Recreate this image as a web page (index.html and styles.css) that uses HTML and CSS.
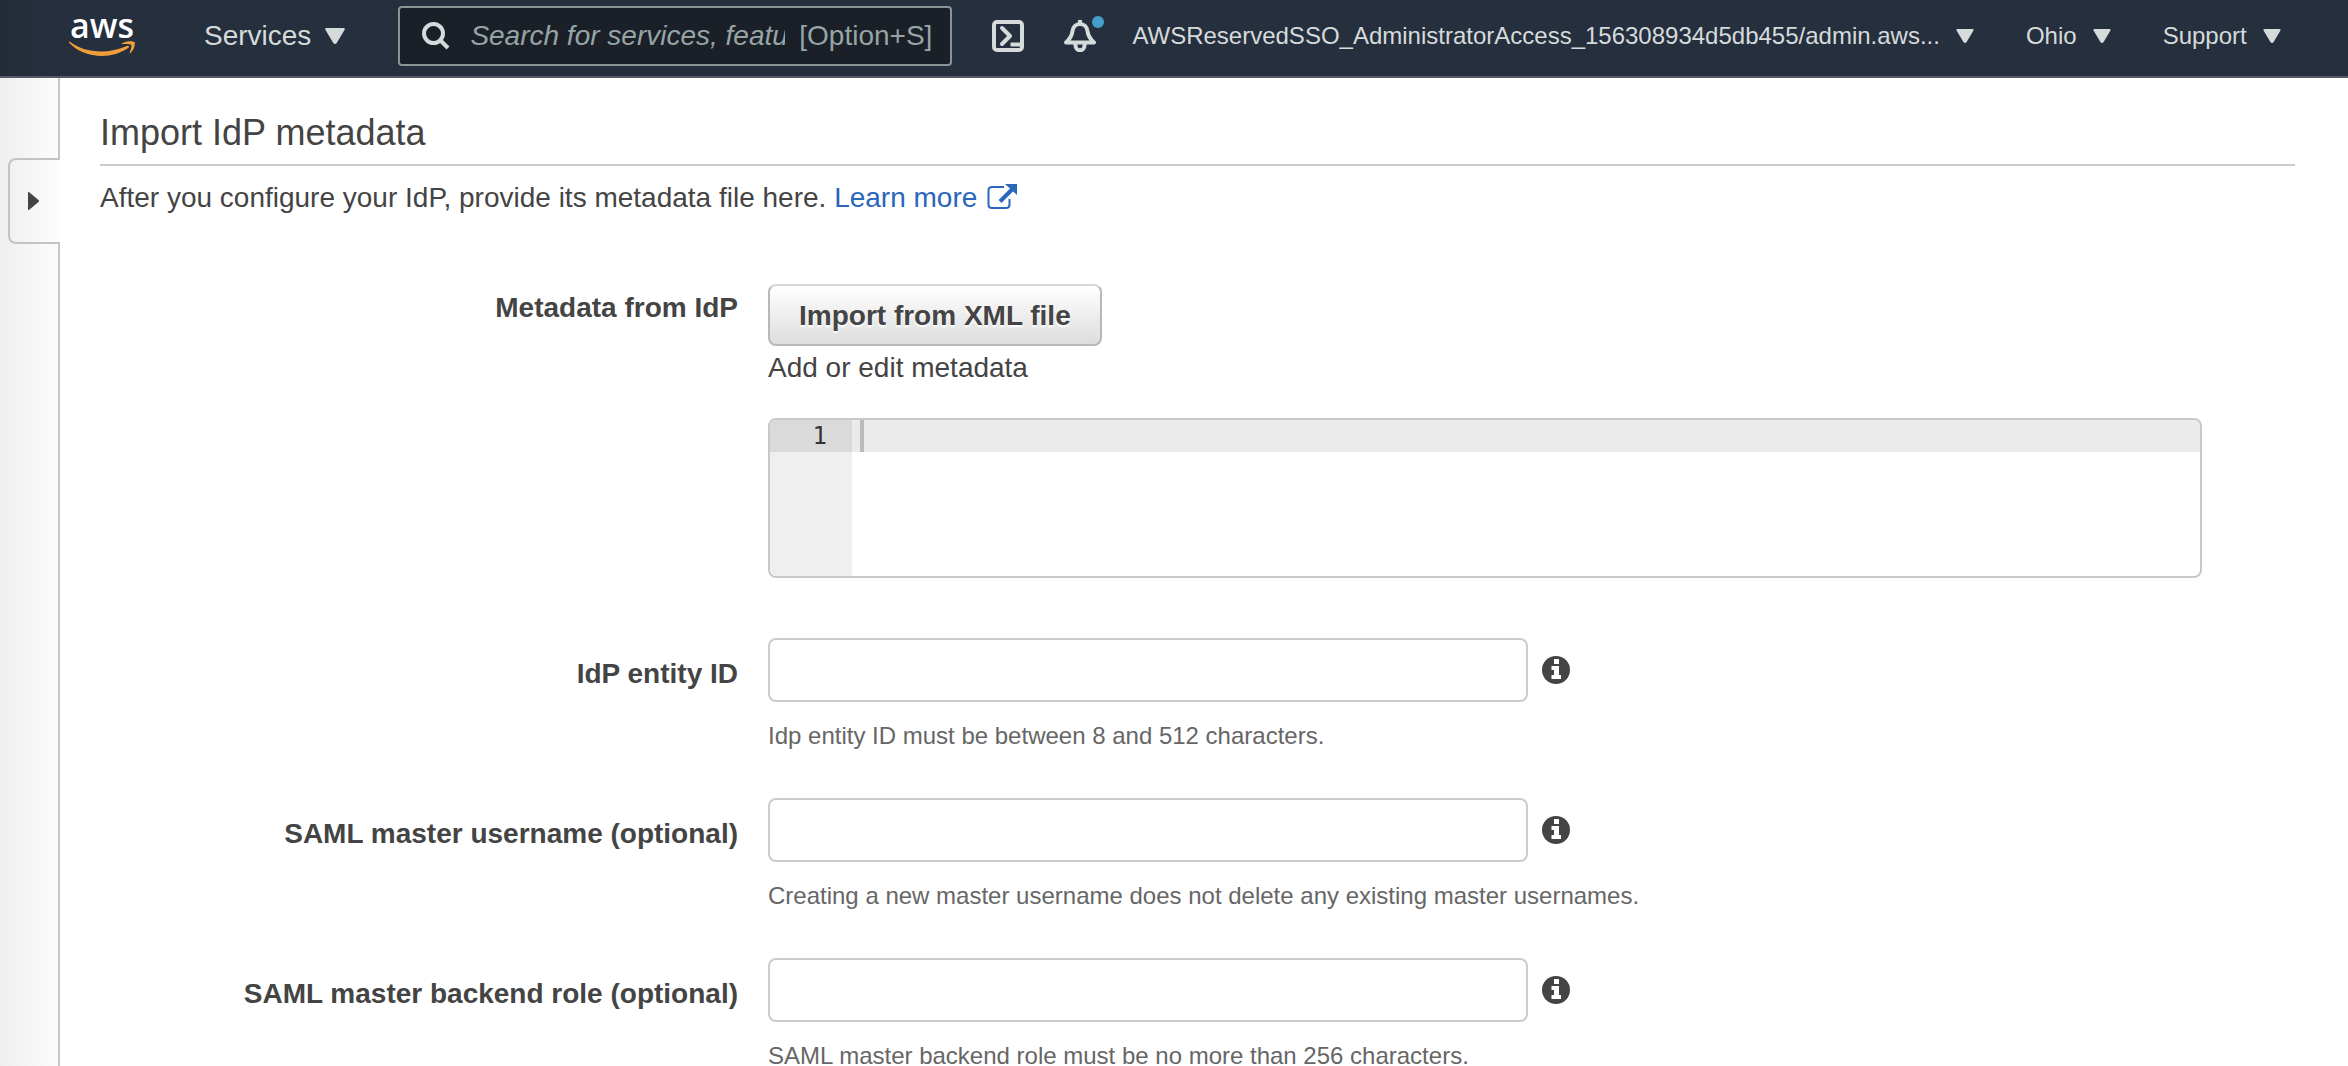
FILE: index.html
```html
<!DOCTYPE html>
<html lang="en">
<head>
<meta charset="utf-8">
<meta name="viewport" content="width=device-width, initial-scale=1">
<title>Import IdP metadata</title>
<link rel="stylesheet" href="styles.css">
</head>
<body>
<svg class="sprite" aria-hidden="true">
  <symbol id="caret" viewBox="0 0 20 16"><path d="M1.500 0h17q2 0 1 2l-7.500 12.500q-2 3-4 0L.500 2q-1-2 1-2z"/></symbol>
  <symbol id="info" viewBox="0 0 28 28"><circle cx="14" cy="14" r="14" fill="#444"/><path fill="#fff" d="M12 3h5v5h-5zM9.500 10H17v9h2v4H9.500v-4H12v-5H9.500z"/></symbol>
</svg>
<header class="topbar">
  <a class="logo" href="#" aria-label="AWS home">
    <span class="logo-word">aws</span>
    <svg class="logo-smile" viewBox="0 0 66 15" aria-hidden="true"><path d="M.5 0.500C9 7 20 10.500 32 10.500c9 0 18-2 26-5.500 1.600-.7 2.800 1 1.200 2C52 12 42 15 33 15 20 15 8 10 .3 2-.4 1 0 0 .5.500z"/><path d="M53 2.200C57-.3 64-.3 65.500 1c1.200 2-.5 8.500-4 11-.7.500-1.200.2-.8-.6 1-2.400 2.200-6.400 1.500-7.600-.8-1-5-.8-8.700-.7-1 0-1.200-.5-.5-.9z"/></svg>
  </a>
  <button class="nav-item nav-services" type="button">Services <svg class="caret caret-lg"><use href="#caret"/></svg></button>
  <label class="search">
    <svg class="search-icon" viewBox="0 0 28 28" aria-hidden="true"><circle cx="11.500" cy="11.500" r="9.500"/><path d="M18 18l8 8"/></svg>
    <input class="search-input" type="text" aria-label="Search" placeholder="Search for services, features, marketplace products, and docs">
    <span class="search-key">[Option+S]</span>
  </label>
  <button class="icon-button" type="button" aria-label="CloudShell"><svg viewBox="0 0 32 32"><rect x="2" y="2" width="28" height="28" rx="3"/><path d="M10 8l8 8-8 8" stroke-linecap="round"/><path d="M18.500 24.500H29"/></svg></button>
  <button class="icon-button bell" type="button" aria-label="Notifications"><svg viewBox="0 0 32 32"><path d="M16 0v4M2 22.500C7 18 8 15 8.500 11c.5-4 3.500-7 7.500-7s7 3 7.500 7c.5 4 1.500 7 6.500 11.500zM11.500 22.500v3a4.500 4.800 0 0 0 9 0v-3"/></svg><span class="dot"></span></button>
  <button class="nav-item nav-account" type="button">AWSReservedSSO_AdministratorAccess_156308934d5db455/admin.aws... <svg class="caret"><use href="#caret"/></svg></button>
  <button class="nav-item" type="button">Ohio <svg class="caret"><use href="#caret"/></svg></button>
  <button class="nav-item" type="button">Support <svg class="caret"><use href="#caret"/></svg></button>
</header>
<div class="page">
  <aside class="rail">
    <button class="rail-tab" type="button" aria-label="Open navigation"><svg viewBox="0 0 11 18"><path d="M0 1q0-2 1.500-.5l9 7.500q1 1 0 2l-9 7.500Q0 19 0 17z"/></svg></button>
  </aside>
  <main class="content">
    <h1 class="title">Import IdP metadata</h1>
    <p class="intro">After you configure your IdP, provide its metadata file here. <a class="link" href="#">Learn more <svg class="external" viewBox="0 0 30 26" aria-hidden="true"><path d="M17 3H5Q1.500 3 1.500 6.500v14Q1.500 24 5 24h14q3.500 0 3.500-3.500V15" fill="none" stroke="currentColor" stroke-width="2"/><path d="M13 17.500L25 5.500" stroke="currentColor" stroke-width="4"/><path d="M18 0h12v11z" fill="currentColor"/></svg></a></p>
    <form class="form">
      <div class="row row-metadata">
        <label class="label" for="metadata">Metadata from IdP</label>
        <div class="field">
          <button class="button" type="button">Import from XML file</button>
          <p class="caption">Add or edit metadata</p>
          <div class="editor">
            <div class="gutter"><span class="line-number">1</span></div>
            <textarea class="code" id="metadata" spellcheck="false"></textarea>
          </div>
        </div>
      </div>
      <div class="row">
        <label class="label" for="entity">IdP entity ID</label>
        <div class="field">
          <div class="control"><input class="input" id="entity" type="text"><svg class="info"><use href="#info"/></svg></div>
          <p class="hint">Idp entity ID must be between 8 and 512 characters.</p>
        </div>
      </div>
      <div class="row">
        <label class="label" for="username">SAML master username (optional)</label>
        <div class="field">
          <div class="control"><input class="input" id="username" type="text"><svg class="info"><use href="#info"/></svg></div>
          <p class="hint">Creating a new master username does not delete any existing master usernames.</p>
        </div>
      </div>
      <div class="row">
        <label class="label" for="role">SAML master backend role (optional)</label>
        <div class="field">
          <div class="control"><input class="input" id="role" type="text"><svg class="info"><use href="#info"/></svg></div>
          <p class="hint">SAML master backend role must be no more than 256 characters.</p>
        </div>
      </div>
    </form>
  </main>
</div>
</body>
</html>
```
FILE: styles.css
```css
* { box-sizing: border-box; }

body {
  margin: 0;
  min-height: 100vh;
  display: flex;
  flex-direction: column;
  background: #fff;
  color: #444;
  font: 28px/32px "Liberation Sans", Arial, sans-serif;
}

h1, p { margin: 0; }
button, input, textarea { font: inherit; }
.sprite { display: none; }

/* Top bar */
.topbar {
  display: flex;
  align-items: center;
  height: 78px;
  padding: 0 66px 4px 69px;
  border-bottom: 2px solid #545b64;
  background: linear-gradient(90deg, #232c37, #262f3e 50px);
  color: #d5dbdb;
}

.logo {
  display: flex;
  flex-direction: column;
  align-items: center;
  gap: 8px;
  width: 66px;
  margin-right: 69px;
  color: #fff;
  text-decoration: none;
}
.logo-word { font: 600 34px/16px "Open Sans", sans-serif; }
.logo-smile { width: 66px; height: 15px; fill: #f19e39; }

.nav-item {
  display: flex;
  align-items: center;
  gap: 16px;
  padding: 0;
  border: 0;
  background: none;
  color: inherit;
  font-size: 24px;
  white-space: nowrap;
  margin-left: 52px;
}
.nav-services { gap: 14px; margin: 0 53px 0 0; font-size: 28px; }
.nav-account { margin-left: 36px; }
.caret { width: 18px; height: 14px; fill: currentColor; }
.caret-lg { width: 20px; height: 16px; }

.search {
  display: flex;
  align-items: center;
  flex: 0 1 554px;
  min-width: 200px;
  height: 60px;
  padding: 0 18px 0 22px;
  border: 2px solid #879596;
  border-radius: 4px;
  background: #1b1f27;
  color: #95a5a6;
}
.search-icon { flex: none; width: 28px; height: 28px; margin-right: 20px; fill: none; stroke: #d5dbdb; stroke-width: 4; }
.search-input {
  flex: 1;
  min-width: 0;
  padding: 0;
  border: 0;
  outline: 0;
  background: none;
  color: inherit;
}
.search-input::placeholder { color: inherit; font-style: italic; opacity: 1; }
.search-key { margin-left: 14px; }

.icon-button {
  position: relative;
  flex: none;
  width: 32px;
  height: 32px;
  margin-left: 40px;
  padding: 0;
  border: 0;
  background: none;
}
.icon-button svg { display: block; width: 32px; height: 32px; fill: none; stroke: #d5dbdb; stroke-width: 4; stroke-linejoin: round; }
.dot { position: absolute; top: -4px; right: -8px; width: 12px; height: 12px; border-radius: 50%; background: #44a0c8; }

/* Page */
.page { display: flex; flex: 1; }

.rail {
  flex: none;
  width: 60px;
  padding-left: 8px;
  background: linear-gradient(90deg, #eee, #fdfdfd);
  display: flex;
  flex-direction: column;
}
.rail::before, .rail::after { content: ""; border-right: 2px solid #c8c8c8; }
.rail::before { height: 80px; }
.rail::after { flex: 1; }
.rail-tab {
  display: flex;
  align-items: center;
  height: 86px;
  padding: 0 0 0 18px;
  border: 2px solid #c3c3c3;
  border-right: 0;
  border-radius: 8px 0 0 8px;
  background: none;
}
.rail-tab svg { width: 11px; height: 18px; fill: #444; }

.content { flex: 1; min-width: 0; padding: 34px 53px 0 40px; }
.title {
  padding-bottom: 10px;
  border-bottom: 2px solid #ccc;
  font-size: 36px;
  line-height: 42px;
  font-weight: 400;
}
.intro { margin-top: 16px; }
.link { color: #2a66bb; text-decoration: none; }
.external { width: 30px; height: 26px; margin-left: 2px; vertical-align: -3px; }

/* Form */
.form { padding: 70px 93px 0 0; }
.row {
  display: grid;
  grid-template-columns: 638fr 1434fr;
  column-gap: 30px;
  margin-bottom: 46px;
}
.label { padding-top: 20px; text-align: right; font-weight: 700; }
.row-metadata { margin-bottom: 60px; }
.row-metadata .label { padding-top: 8px; }
.row:last-child { margin-bottom: 0; }

.button {
  display: block;
  height: 62px;
  padding: 2px 29px 0;
  border: 2px solid #b8b8b8;
  border-top-color: #d8d8d8;
  border-radius: 8px;
  background: linear-gradient(#fff, #ddd);
  color: #444;
  font-weight: 700;
  text-shadow: 0 2px 2px #fff;
}
.caption { margin-top: 6px; }

.editor {
  display: flex;
  height: 160px;
  margin-top: 34px;
  border: 2px solid #c8c8c8;
  border-radius: 8px;
  overflow: hidden;
  font: 24px/32px "DejaVu Sans Mono", monospace;
}
.gutter { width: 82px; background: #efefef; }
.line-number { display: block; padding-right: 25px; background: #dadada; color: #333; text-align: right; }
.code {
  flex: 1;
  padding: 0 8px;
  border: 0;
  outline: 0;
  resize: none;
  background:
    linear-gradient(#bbb, #bbb) 8px 0 / 4px 32px no-repeat,
    linear-gradient(#ebebeb, #ebebeb) 0 0 / 100% 32px no-repeat;
}

.control { display: flex; align-items: center; gap: 14px; }
.input {
  flex: 0 1 760px;
  min-width: 0;
  height: 64px;
  padding: 0 14px;
  border: 2px solid #ccc;
  border-radius: 8px;
  background: #fff;
}
.info { flex: none; width: 28px; height: 28px; }
.hint { margin-top: 18px; color: #666; font-size: 24px; }
```
